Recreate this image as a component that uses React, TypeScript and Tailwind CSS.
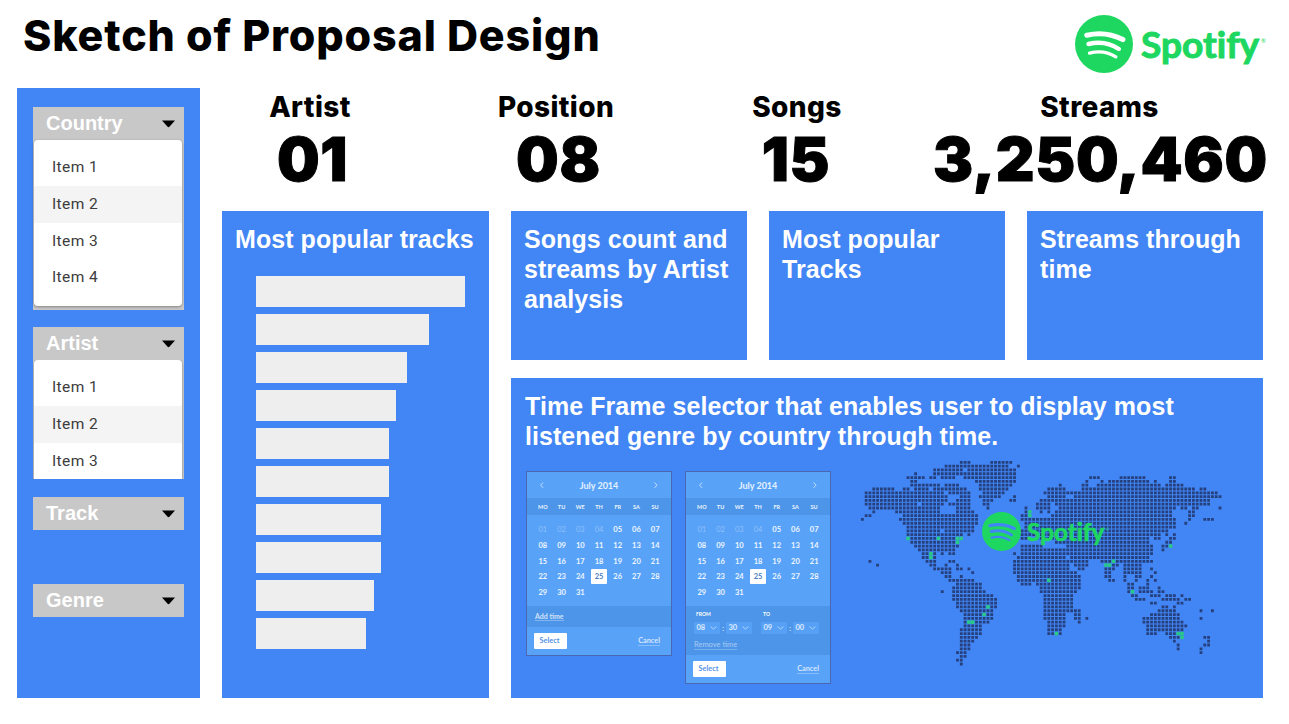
import React from "react";

const LAND = [
  "26-28,34-39",
  "22-38,41",
  "19-26,28-40",
  "14,19-40",
  "12-16,18-19,21-24,27-40,60-62,68-74,81-82",
  "13-14,30-40,59,63,65-75,77,81-82",
  "13-20,22-25,31-39,52,58-59,62-78,80-84",
  "3-8,11-12,14-17,19-27,31-38,49-53,58-87,89-90",
  "1-21,23-28,32-37,48-93",
  "1-22,26-28,31-36,40,49-53,56-94",
  "1-22,25-28,32-34,39-40,47-91",
  "1-14,16-21,23-28,32-33,46-49,51-91",
  "2-20,25-28,33,43,46-49,52-82,84-85,87-88,94",
  "3,9-20,25-29,43,47,49,51-81,86-87",
  "1-2,11-30,42-43,50-81,86-87",
  "0,10-30,42-82,86,90-92",
  "11-30,43-82,85",
  "12-29,43-82",
  "12-20,22-29,42-80",
  "12-26,28,42-78,80,82",
  "13-19,21-24,42-43,46-75,77-78,81-82",
  "13-24,51-75,80-81",
  "14-25,42-47,54-76,79-80",
  "15-24,42-76,79",
  "16-17,19,21,23-24,40,42-76",
  "16-17,19,41-53,55-75",
  "2,17-19,23-24,40-59,63-65,67-76",
  "4,18-19,22,25,40-54,56-59,66-67,69-73",
  "19-23,25-26,28,40-54,57-58,64-66,69-73,76",
  "21-23,29,40-56,64-65,69-73,77",
  "22-23,26,41-57,64-65,69,72-73,76",
  "23-29,41-48,50-57,65-66,69,72,75,77",
  "25-31,42-44,46-57,70-71,75",
  "24-31,47-57,70-71,73-75,78",
  "21,24-32,47-56,70,73-76,78-79",
  "24-34,48-55,71-72,76-78,80-82,84",
  "24-35,48-55,72-74,79-83,85-86",
  "25-35,48-55,76-77,83-84",
  "25-32,34-35,48-55,79-80,82",
  "26-34,48-57,78-82,89,92",
  "27-31,33-34,48-53,56-57,76-83",
  "27-34,48-53,56-57,59,74-83,89",
  "27,30-33,49-53,57,74-84",
  "27-31,49-53,75-85",
  "26-31,49-52,75-84",
  "26-31,49-50,52,75-77,80-82",
  "26-30,81-83,90-91",
  "26-29,82,91",
  "26-28,83,90-91",
  "26-28,83,89",
  "25-27,89",
  "26-27",
  "25-26",
  "26",
];

const MARKETS: [number, number][] = [
  [44, 13], [44, 14], [12, 20], [20, 20], [25, 20], [26, 20], [25, 21], [18, 24], [18, 25],
  [81, 22], [66, 26], [64, 27], [65, 27], [49, 31], [71, 34], [33, 38], [32, 40], [28, 42],
  [29, 42], [51, 45], [83, 45], [84, 45], [84, 46],
];

const PITCH = 3.805;

function landPath() {
  const green = new Set(MARKETS.map(([c, r]) => `${c}-${r}`));
  let d = "";
  LAND.forEach((row, r) => {
    row.split(",").forEach((run) => {
      const [a, b = a] = run.split("-").map(Number);
      for (let c = a; c <= b; c++) {
        if (green.has(`${c}-${r}`)) continue;
        d += `M${(c * PITCH + 0.95).toFixed(2)} ${(r * PITCH + 0.95).toFixed(2)}h2.8v2.8h-2.8z`;
      }
    });
  });
  return d;
}

function WorldMap() {
  return (
    <svg width="366" height="212" viewBox="0 0 366 212" className="block">
      <path d={landPath()} fill="#25407c" />
      {MARKETS.map(([c, r]) => (
        <rect key={`${c}-${r}`} x={c * PITCH + 0.6} y={r * PITCH + 0.6} width="3.5" height="3.5" fill="#27c985" />
      ))}
    </svg>
  );
}

function Roundel({ className, id }: { className: string; id: string }) {
  return (
    <svg viewBox="15 15 172 172" className={className}>
      <mask id={id}>
        <rect x="15" y="15" width="172" height="172" fill="#fff" />
        <g fill="none" stroke="#000" strokeLinecap="round">
          <path d="M50 75Q107 62 157 88" strokeWidth="15" />
          <path d="M55 101Q105 89 145 116" strokeWidth="13" />
          <path d="M58 128Q101 117 136 139" strokeWidth="10" />
        </g>
      </mask>
      <circle cx="101" cy="101" r="86" fill="currentColor" mask={`url(#${id})`} />
    </svg>
  );
}

function Spotify({ small = false }: { small?: boolean }) {
  return (
    <div className={`flex items-center text-[#1ed760] ${small ? "gap-[6px]" : "gap-[8px]"}`}>
      <Roundel
        id={small ? "roundel-small" : "roundel-large"}
        className={small ? "size-[39px] shrink-0" : "size-[58px] shrink-0"}
      />
      <svg width={small ? 84 : 128} height={small ? 38 : 58} viewBox="0 0 128 58" className="overflow-visible">
        <text
          x="0"
          y="42.5"
          textLength="118"
          lengthAdjust="spacingAndGlyphs"
          fill="currentColor"
          stroke="currentColor"
          strokeWidth="1"
          className="font-['Lato'] text-[37px] font-bold [font-variant-ligatures:none]"
        >
          Spotify
        </text>
        <text x="120" y="28" fill="currentColor" className="font-['Lato'] text-[6px]">
          ®
        </text>
      </svg>
    </div>
  );
}

function Dropdown({ label, items, clipped }: { label: string; items?: string[]; clipped?: boolean }) {
  return (
    <div className="w-[151px] bg-[#c8c8c8]">
      <div className="flex h-[33px] items-center justify-between pr-[9px] pl-[13px]">
        <span className="text-[20px] leading-[33px] font-bold text-white">{label}</span>
        <svg width="13" height="8" viewBox="0 0 13 8" className="mt-px">
          <path d="M0 0.5h13L7.6 6.6Q6.5 7.8 5.4 6.6z" fill="#000" />
        </svg>
      </div>
      {items && (
        <div className={clipped ? "h-[119px] overflow-hidden pr-[2px] pl-px" : "pr-[2px] pb-[4px] pl-px"}>
          <div
            className={`bg-white pt-[9px] shadow-[0_1px_3px_rgba(0,0,0,0.35)] ${
              clipped ? "rounded-t-[4px]" : "rounded-[4px] pb-[10px]"
            }`}
          >
            {items.map((item, i) => (
              <div
                key={item}
                className={`h-[36.75px] pl-[18px] font-['Roboto'] text-[15.5px] leading-[37px] tracking-[0.4px] text-[#3c3c3c] ${
                  i === 1 ? "bg-[#f4f4f4]" : ""
                }`}
              >
                {item}
              </div>
            ))}
          </div>
        </div>
      )}
    </div>
  );
}

const CHEVRON = "M0.5 0.5L3 3.2L0.5 5.9";

function TimeBox({ value }: { value: string }) {
  return (
    <div className="flex h-[12px] w-[26px] items-center justify-between rounded-[1px] bg-[#56a0f5] pr-[3px] pl-[2.5px] text-[7.5px] font-bold text-white/80">
      {value}
      <svg width="7" height="4" viewBox="0 0 7 4">
        <path d="M0.6 0.6L3.5 3L6.4 0.6" fill="none" stroke="#d5e6fd" strokeWidth="0.7" />
      </svg>
    </div>
  );
}

function Calendar({ withTime = false }: { withTime?: boolean }) {
  const days = Array.from({ length: 31 }, (_, i) => i + 1);
  return (
    <div
      className={`flex w-[146px] shrink-0 flex-col border border-[#4a67b4] bg-[#58a2f8] font-['Lato'] text-white ${
        withTime ? "h-[213px]" : "h-[185px]"
      }`}
    >
      <div className="flex h-[26px] items-center justify-between px-[13px] pt-px">
        <svg width="4" height="7" viewBox="0 0 4 7">
          <path d={CHEVRON} transform="matrix(-1 0 0 1 3.6 0)" fill="none" stroke="#cfe3fd" strokeWidth="0.9" />
        </svg>
        <span className="text-[9px] font-bold text-white/85">July 2014</span>
        <svg width="4" height="7" viewBox="0 0 4 7">
          <path d={CHEVRON} fill="none" stroke="#cfe3fd" strokeWidth="0.9" />
        </svg>
      </div>
      <div className="grid h-[17px] grid-cols-7 items-center bg-[#4d95e8] px-[6.5px] pt-px text-center text-[5.5px] font-bold text-white/90">
        {["MO", "TU", "WE", "TH", "FR", "SA", "SU"].map((d) => (
          <span key={d}>{d}</span>
        ))}
      </div>
      <div className="grid h-[91px] auto-rows-[15.7px] grid-cols-7 items-center px-[6.5px] pt-[7px] text-center text-[7.5px] leading-[15px] font-bold">
        {days.map((d) => (
          <span
            key={d}
            className={
              d === 25
                ? "mx-auto w-[16px] rounded-[1px] bg-white text-[#4a80c4]"
                : d < 5
                  ? "font-normal text-white/35"
                  : "text-white/90"
            }
          >
            {String(d).padStart(2, "0")}
          </span>
        ))}
      </div>
      {withTime ? (
        <div className="h-[49px] bg-[#4d95e8] px-[8px] pt-[5px]">
          <div className="grid grid-cols-2 text-[5px] leading-[7px] font-bold">
            <span className="pl-[2px]">FROM</span>
            <span className="pl-[5px]">TO</span>
          </div>
          <div className="mt-[4px] flex items-center text-[7px] leading-[12px]">
            <TimeBox value="08" />
            <span className="w-[6px] text-center">:</span>
            <TimeBox value="30" />
            <span className="w-[9px]" />
            <TimeBox value="09" />
            <span className="w-[6px] text-center">:</span>
            <TimeBox value="00" />
          </div>
          <div className="mt-[5px] text-[7.5px] leading-[12px] text-white/50">
            <span className="border-b border-white/25">Remove time</span>
          </div>
        </div>
      ) : (
        <div className="h-[21px] bg-[#4d95e8] px-[8px] text-[7px] leading-[20px] font-bold text-white/75">
          <span className="border-b border-white/30">Add time</span>
        </div>
      )}
      <div className="flex flex-1 items-center justify-between pr-[11px] pl-[7px] text-[7.3px] font-bold">
        <span className="h-[16px] w-[33px] rounded-[1px] bg-white pr-[2px] text-center leading-[16px] text-[#5593e6]">
          Select
        </span>
        <span className="border-b border-white/30 leading-[9px] text-white/75">Cancel</span>
      </div>
    </div>
  );
}

const HEADING = "text-[25px] leading-[30px] font-bold tracking-[0.06px] text-white";

export default function App() {
  const bars = [209, 173, 151, 140, 133, 133, 125, 125, 118, 110];
  const label = "text-[28px] leading-[38px] font-extrabold tracking-[0.4px]";
  const value = "text-[60px] leading-[66px] font-black tracking-[0.7px] [-webkit-text-stroke:1px_#000]";
  return (
    <div className="h-[724px] w-[1289px] overflow-hidden bg-white font-['Liberation_Sans',sans-serif] text-black">
      <header className="flex h-[88px] items-start justify-between pr-[20px] pl-[23px]">
        <h1 className="pt-[8px] font-['Inter'] text-[43px] leading-[54px] font-extrabold tracking-[0.85px] whitespace-nowrap">
          Sketch of Proposal Design
        </h1>
        <div className="pt-[15px]">
          <Spotify />
        </div>
      </header>
      <div className="flex pl-[17px]">
        <aside className="h-[610px] w-[183px] bg-[#4285f4] pt-[19px] pl-[16px]">
          <Dropdown label="Country" items={["Item 1", "Item 2", "Item 3", "Item 4"]} />
          <div className="mt-[17px]">
            <Dropdown label="Artist" items={["Item 1", "Item 2", "Item 3"]} clipped />
          </div>
          <div className="mt-[18px]">
            <Dropdown label="Track" />
          </div>
          <div className="mt-[54px]">
            <Dropdown label="Genre" />
          </div>
        </aside>
        <main className="ml-[22px] w-[1041px]">
          <section className="flex h-[123px] text-center font-['Inter'] whitespace-nowrap">
            <div className="w-[176px] shrink-0">
              <div className={label}>Artist</div>
              <div className={`${value} pl-[5px]`}>01</div>
            </div>
            <div className="w-[316px] shrink-0">
              <div className={label}>Position</div>
              <div className={`${value} pl-[5px]`}>08</div>
            </div>
            <div className="w-[162px] shrink-0">
              <div className={`${label} pl-[4px]`}>Songs</div>
              <div className={`${value} pl-[2px]`}>15</div>
            </div>
            <div className="ml-[57px] w-[333px] shrink-0">
              <div className={label}>Streams</div>
              <div className={value}>3,250,460</div>
            </div>
          </section>
          <section className="flex gap-[22px]">
            <div className="h-[487px] w-[267px] shrink-0 bg-[#4285f4] pt-[13px] pl-[13px]">
              <h2 className={`${HEADING} whitespace-nowrap`}>Most popular tracks</h2>
              <div className="mt-[22px] ml-[21px] flex flex-col gap-[7px]">
                {bars.map((w, i) => (
                  <div key={i} className="h-[31px] bg-[#eeeeee]" style={{ width: w }} />
                ))}
              </div>
            </div>
            <div className="flex w-[752px] flex-col gap-[18px]">
              <div className="grid h-[149px] grid-cols-3 gap-[22px]">
                <div className="bg-[#4285f4] pt-[13px] pl-[13px]">
                  <h2 className={HEADING}>
                    Songs count and
                    <br />
                    streams by Artist
                    <br />
                    analysis
                  </h2>
                </div>
                <div className="bg-[#4285f4] pt-[13px] pl-[13px]">
                  <h2 className={HEADING}>
                    Most popular
                    <br />
                    Tracks
                  </h2>
                </div>
                <div className="bg-[#4285f4] pt-[13px] pl-[13px]">
                  <h2 className={HEADING}>
                    Streams through
                    <br />
                    time
                  </h2>
                </div>
              </div>
              <div className="h-[320px] bg-[#4285f4] pt-[13px] pl-[14px]">
                <h2 className={`${HEADING} whitespace-nowrap`}>
                  Time Frame selector that enables user to display most
                  <br />
                  listened genre by country through time.
                </h2>
                <div className="mt-[20px] ml-px flex items-start">
                  <Calendar />
                  <div className="ml-[13px]">
                    <Calendar withTime />
                  </div>
                  <div className="relative -mt-[11px] ml-[29px]">
                    <WorldMap />
                    <div className="absolute top-[52px] left-[122px]">
                      <Spotify small />
                    </div>
                  </div>
                </div>
              </div>
            </div>
          </section>
        </main>
      </div>
    </div>
  );
}
